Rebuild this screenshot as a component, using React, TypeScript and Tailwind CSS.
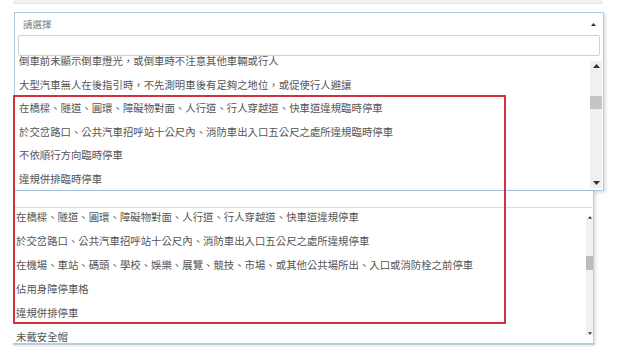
const firstList = [
  "倒車前未顯示倒車燈光，或倒車時不注意其他車輛或行人",
  "大型汽車無人在後指引時，不先測明車後有足夠之地位，或促使行人避讓",
  "在橋樑、隧道、圓環、障礙物對面、人行道、行人穿越道、快車道違規臨時停車",
  "於交岔路口、公共汽車招呼站十公尺內、消防車出入口五公尺之處所違規臨時停車",
  "不依順行方向臨時停車",
  "違規併排臨時停車",
];

const secondList = [
  "在橋樑、隧道、圓環、障礙物對面、人行道、行人穿越道、快車道違規停車",
  "於交岔路口、公共汽車招呼站十公尺內、消防車出入口五公尺之處所違規停車",
  "在機場、車站、碼頭、學校、娛樂、展覽、競技、市場、或其他公共場所出、入口或消防栓之前停車",
  "佔用身障停車格",
  "違規併排停車",
  "未戴安全帽",
];

function Tri({ up, className }: { up?: boolean; className?: string }) {
  return (
    <svg width="7" height="4" viewBox="0 0 7 4" className={className}>
      <path d={up ? "M0 4 L3.5 0 L7 4 Z" : "M0 0 L3.5 4 L7 0 Z"} fill="#333" />
    </svg>
  );
}

export default function App() {
  return (
    <div
      className="relative w-[640px] h-[347px] overflow-hidden bg-white text-[#555] text-[10.4px]"
      style={{ fontFamily: '"Noto Sans CJK TC", "Noto Sans", sans-serif' }}
    >
      {/* previous field peeking at the top */}
      <div className="ml-[13px] w-[590px] h-[4px] bg-[#f1f3f4] border-b border-[#e6e6e6]" />

      {/* first open dropdown */}
      <div className="ml-[14px] mt-[8px] w-[590px] h-[179px] border border-[#aecbe4] bg-white shadow-[2px_2px_3px_rgba(0,0,0,0.12)] flex flex-col">
        <div className="h-[22px] flex items-center justify-between pl-[8px] pr-[7px] text-[9.5px] text-[#777]">
          <span>請選擇</span>
          <Tri up className="w-[5px] h-[3px]" />
        </div>
        <div className="mx-[3px] h-[21px] border border-[#d0d0d0] rounded-[2px]" />
        <div className="flex-1 flex overflow-hidden">
          <div className="flex-1 overflow-hidden">
            <div className="mt-[-7px] pl-[4px]">
              {firstList.map((t) => (
                <div key={t} className="h-[23.6px] flex items-center whitespace-nowrap">
                  {t}
                </div>
              ))}
            </div>
          </div>
          <div className="w-[12px] mt-[5px] mb-[2px] mr-[1px] bg-[#eef0f2] flex flex-col items-center justify-between py-[3px]">
            <Tri up />
            <div className="flex-1 w-full pt-[28px]">
              <div className="h-[13px] w-full bg-[#c4c4c4]" />
            </div>
            <Tri />
          </div>
        </div>
      </div>

      {/* second dropdown screenshot */}
      <div className="ml-[13px] w-[581px] border-r border-[#c8c8c8] shadow-[2px_0_3px_rgba(0,0,0,0.12)] bg-white">
        <div className="h-[17px] border-b border-[#dcdcdc] mr-[1px]" />
        <div className="h-[135px] flex overflow-hidden">
          <div className="flex-1 overflow-hidden">
            <div className="mt-[-3px] pl-[3px]">
              {secondList.map((t) => (
                <div key={t} className="h-[24px] flex items-center whitespace-nowrap">
                  {t}
                </div>
              ))}
            </div>
          </div>
          <div className="w-[7px] my-[8px] bg-[#f1f1f1] flex flex-col items-center justify-between">
            <Tri up className="w-[4px] h-[3px]" />
            <div className="flex-1 w-full pt-[37px]">
              <div className="h-[14px] w-full bg-[#bdbdbd]" />
            </div>
            <Tri className="w-[4px] h-[3px]" />
          </div>
        </div>
      </div>
      <div className="ml-[13px] w-[582px] h-[2px] bg-[#b9cbd6]" />
      <div className="ml-[13px] w-[582px] h-[4px] bg-[#eef1f3]" />

      {/* red annotation frame */}
      <div className="absolute left-[13px] top-[95px] w-[493px] h-[229px] border-2 border-[#d0333b]" />
    </div>
  );
}
